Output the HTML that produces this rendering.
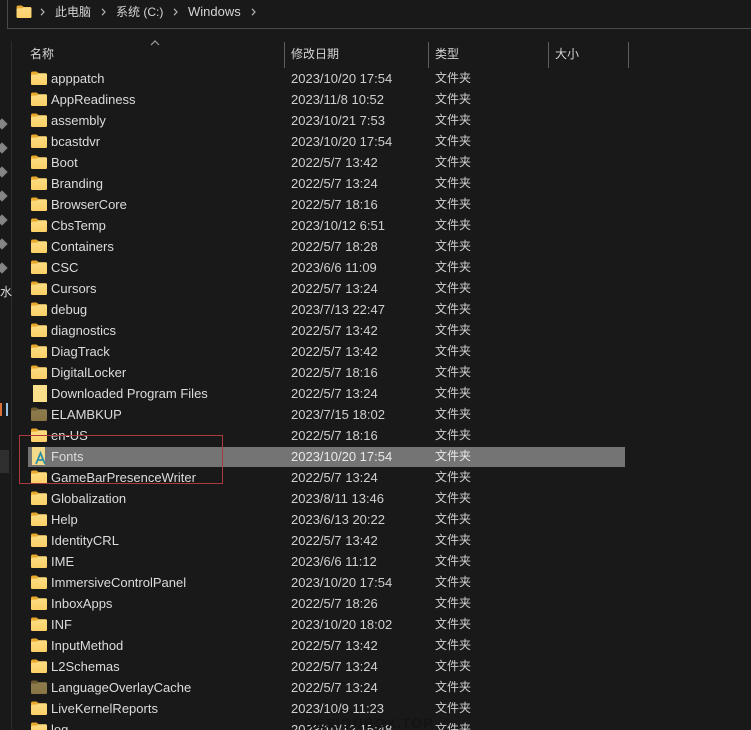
<!DOCTYPE html>
<html><head><meta charset="utf-8">
<style>
html,body{margin:0;padding:0;background:#191919;width:751px;height:730px;overflow:hidden}
body{position:relative;font-family:"Liberation Sans","Noto Sans CJK SC",sans-serif;font-size:13px;color:#dcdcdc}
.a{position:absolute;white-space:nowrap}
.r{position:absolute;left:0;width:751px;height:21px;line-height:21px}
.r svg{position:absolute;left:31px;top:3px}
.n{position:absolute;left:51px;white-space:nowrap}
.d{position:absolute;left:291px;color:#cfcfcf;white-space:nowrap}
.t{position:absolute;left:435px;color:#cfcfcf;white-space:nowrap;font-size:12px}
.s{position:absolute;top:42px;width:1px;height:26px;background:#5e5e5e}
.pin{position:absolute;left:-2px;width:8px;height:8px;background:#858585;transform:rotate(45deg)}
.c{position:absolute;top:8px}
.h{position:absolute;top:46px;line-height:16px;font-size:12px;color:#d4d4d4;white-space:nowrap}
</style></head><body>
<svg width="0" height="0" style="position:absolute"><defs>
<linearGradient id="y" x1="0" y1="0" x2="0" y2="1"><stop offset="0" stop-color="#fbdc82"/><stop offset="1" stop-color="#fdd067"/></linearGradient>
<linearGradient id="z" x1="0" y1="0" x2="0" y2="1"><stop offset="0" stop-color="#8d7c4e"/><stop offset="1" stop-color="#887442"/></linearGradient>
<symbol id="f" viewBox="0 0 16 14"><path d="M0 2.2Q0 .5 1.8 .5H5.5L7.8 2.2H14.5Q16 2.2 16 3.7V12.5Q16 14 14.5 14H1.5Q0 14 0 12.5Z" fill="#e8a92f"/><path d="M0 4.6Q0 3.6 1.2 3.6H5.6L7.8 2.4H14.5Q16 2.4 16 3.7V12.5Q16 14 14.5 14H1.5Q0 14 0 12.5Z" fill="url(#y)"/></symbol>
<symbol id="g" viewBox="0 0 16 14"><path d="M0 2.2Q0 .5 1.8 .5H5.5L7.8 2.2H14.5Q16 2.2 16 3.7V12.5Q16 14 14.5 14H1.5Q0 14 0 12.5Z" fill="#6b5a30"/><path d="M0 4.6Q0 3.6 1.2 3.6H5.6L7.8 2.4H14.5Q16 2.4 16 3.7V12.5Q16 14 14.5 14H1.5Q0 14 0 12.5Z" fill="url(#z)"/></symbol>
</defs></svg>

<div class="a" style="left:7px;top:-2px;width:760px;height:31px;border:1px solid #4a4a4a;box-sizing:border-box"></div>
<svg class="a" style="left:16px;top:5px" width="16" height="13"><use href="#f" width="16" height="13"/></svg>
<svg class="c" style="left:40px" width="5" height="8"><path d="M1 .8L4 4L1 7.2" fill="none" stroke="#b5b5b5" stroke-width="1.2"/></svg>
<div class="a" style="left:55px;top:4px;line-height:16px;font-size:12px;color:#d4d4d4">此电脑</div>
<svg class="c" style="left:101px" width="5" height="8"><path d="M1 .8L4 4L1 7.2" fill="none" stroke="#b5b5b5" stroke-width="1.2"/></svg>
<div class="a" style="left:116px;top:4px;line-height:16px;font-size:12px;color:#d4d4d4">系统 (C:)</div>
<svg class="c" style="left:173px" width="5" height="8"><path d="M1 .8L4 4L1 7.2" fill="none" stroke="#b5b5b5" stroke-width="1.2"/></svg>
<div class="a" style="left:188px;top:4px;line-height:16px;color:#d4d4d4">Windows</div>
<svg class="c" style="left:251px" width="5" height="8"><path d="M1 .8L4 4L1 7.2" fill="none" stroke="#b5b5b5" stroke-width="1.2"/></svg>

<div class="a" style="left:11px;top:41px;width:1px;height:689px;background:#2c2c2c"></div>
<div class="a" style="left:0;top:450px;width:9px;height:23px;background:#2f2f2f"></div>
<div class="pin" style="top:120px"></div><div class="pin" style="top:144px"></div><div class="pin" style="top:168px"></div><div class="pin" style="top:192px"></div><div class="pin" style="top:216px"></div><div class="pin" style="top:240px"></div><div class="pin" style="top:264px"></div>
<div class="a" style="left:0;top:284px;line-height:16px;font-size:12px;color:#ddd">水</div>
<div class="a" style="left:0;top:403px;width:2px;height:13px;background:#d8703a"></div>
<div class="a" style="left:6px;top:403px;width:2px;height:13px;background:#9cc0e0"></div>

<svg class="a" style="left:150px;top:40px" width="10" height="6"><path d="M1 5L5 1L9 5" fill="none" stroke="#a0a0a0" stroke-width="1.2"/></svg>
<div class="h" style="left:30px">名称</div>
<div class="s" style="left:284px"></div>
<div class="h" style="left:291px">修改日期</div>
<div class="s" style="left:428px"></div>
<div class="h" style="left:435px">类型</div>
<div class="s" style="left:548px"></div>
<div class="h" style="left:555px">大小</div>
<div class="s" style="left:628px"></div>

<div class="a" style="left:28px;top:447px;width:597px;height:20px;background:#747474"></div>

<div class="r" style="top:68px"><svg width="16" height="14"><use href="#f"/></svg><span class="n">apppatch</span><span class="d">2023/10/20 17:54</span><span class="t">文件夹</span></div>
<div class="r" style="top:89px"><svg width="16" height="14"><use href="#f"/></svg><span class="n">AppReadiness</span><span class="d">2023/11/8 10:52</span><span class="t">文件夹</span></div>
<div class="r" style="top:110px"><svg width="16" height="14"><use href="#f"/></svg><span class="n">assembly</span><span class="d">2023/10/21 7:53</span><span class="t">文件夹</span></div>
<div class="r" style="top:131px"><svg width="16" height="14"><use href="#f"/></svg><span class="n">bcastdvr</span><span class="d">2023/10/20 17:54</span><span class="t">文件夹</span></div>
<div class="r" style="top:152px"><svg width="16" height="14"><use href="#f"/></svg><span class="n">Boot</span><span class="d">2022/5/7 13:42</span><span class="t">文件夹</span></div>
<div class="r" style="top:173px"><svg width="16" height="14"><use href="#f"/></svg><span class="n">Branding</span><span class="d">2022/5/7 13:24</span><span class="t">文件夹</span></div>
<div class="r" style="top:194px"><svg width="16" height="14"><use href="#f"/></svg><span class="n">BrowserCore</span><span class="d">2022/5/7 18:16</span><span class="t">文件夹</span></div>
<div class="r" style="top:215px"><svg width="16" height="14"><use href="#f"/></svg><span class="n">CbsTemp</span><span class="d">2023/10/12 6:51</span><span class="t">文件夹</span></div>
<div class="r" style="top:236px"><svg width="16" height="14"><use href="#f"/></svg><span class="n">Containers</span><span class="d">2022/5/7 18:28</span><span class="t">文件夹</span></div>
<div class="r" style="top:257px"><svg width="16" height="14"><use href="#f"/></svg><span class="n">CSC</span><span class="d">2023/6/6 11:09</span><span class="t">文件夹</span></div>
<div class="r" style="top:278px"><svg width="16" height="14"><use href="#f"/></svg><span class="n">Cursors</span><span class="d">2022/5/7 13:24</span><span class="t">文件夹</span></div>
<div class="r" style="top:299px"><svg width="16" height="14"><use href="#f"/></svg><span class="n">debug</span><span class="d">2023/7/13 22:47</span><span class="t">文件夹</span></div>
<div class="r" style="top:320px"><svg width="16" height="14"><use href="#f"/></svg><span class="n">diagnostics</span><span class="d">2022/5/7 13:42</span><span class="t">文件夹</span></div>
<div class="r" style="top:341px"><svg width="16" height="14"><use href="#f"/></svg><span class="n">DiagTrack</span><span class="d">2022/5/7 13:42</span><span class="t">文件夹</span></div>
<div class="r" style="top:362px"><svg width="16" height="14"><use href="#f"/></svg><span class="n">DigitalLocker</span><span class="d">2022/5/7 18:16</span><span class="t">文件夹</span></div>
<div class="r" style="top:383px"><svg width="14" height="17" style="left:33px;top:2px"><path d="M0 0H14V17H0Z" fill="#fbdf8a"/></svg><span class="n">Downloaded Program Files</span><span class="d">2022/5/7 13:24</span><span class="t">文件夹</span></div>
<div class="r" style="top:404px"><svg width="16" height="14"><use href="#g"/></svg><span class="n">ELAMBKUP</span><span class="d">2023/7/15 18:02</span><span class="t">文件夹</span></div>
<div class="r" style="top:425px"><svg width="16" height="14"><use href="#f"/></svg><span class="n">en-US</span><span class="d">2022/5/7 18:16</span><span class="t">文件夹</span></div>
<div class="r" style="top:446px"><svg width="15" height="18" style="left:32px;top:1px"><path d="M0 0H13V18H0Z" fill="#f3d98a"/><path d="M4 17L8.5 6L13 17M6 13H11" fill="none" stroke="#2b8fa8" stroke-width="1.7"/></svg><span class="n">Fonts</span><span class="d" style="color:#e8e8e8">2023/10/20 17:54</span><span class="t" style="color:#e8e8e8">文件夹</span></div>
<div class="r" style="top:467px"><svg width="16" height="14"><use href="#f"/></svg><span class="n">GameBarPresenceWriter</span><span class="d">2022/5/7 13:24</span><span class="t">文件夹</span></div>
<div class="r" style="top:488px"><svg width="16" height="14"><use href="#f"/></svg><span class="n">Globalization</span><span class="d">2023/8/11 13:46</span><span class="t">文件夹</span></div>
<div class="r" style="top:509px"><svg width="16" height="14"><use href="#f"/></svg><span class="n">Help</span><span class="d">2023/6/13 20:22</span><span class="t">文件夹</span></div>
<div class="r" style="top:530px"><svg width="16" height="14"><use href="#f"/></svg><span class="n">IdentityCRL</span><span class="d">2022/5/7 13:42</span><span class="t">文件夹</span></div>
<div class="r" style="top:551px"><svg width="16" height="14"><use href="#f"/></svg><span class="n">IME</span><span class="d">2023/6/6 11:12</span><span class="t">文件夹</span></div>
<div class="r" style="top:572px"><svg width="16" height="14"><use href="#f"/></svg><span class="n">ImmersiveControlPanel</span><span class="d">2023/10/20 17:54</span><span class="t">文件夹</span></div>
<div class="r" style="top:593px"><svg width="16" height="14"><use href="#f"/></svg><span class="n">InboxApps</span><span class="d">2022/5/7 18:26</span><span class="t">文件夹</span></div>
<div class="r" style="top:614px"><svg width="16" height="14"><use href="#f"/></svg><span class="n">INF</span><span class="d">2023/10/20 18:02</span><span class="t">文件夹</span></div>
<div class="r" style="top:635px"><svg width="16" height="14"><use href="#f"/></svg><span class="n">InputMethod</span><span class="d">2022/5/7 13:42</span><span class="t">文件夹</span></div>
<div class="r" style="top:656px"><svg width="16" height="14"><use href="#f"/></svg><span class="n">L2Schemas</span><span class="d">2022/5/7 13:24</span><span class="t">文件夹</span></div>
<div class="r" style="top:677px"><svg width="16" height="14"><use href="#g"/></svg><span class="n">LanguageOverlayCache</span><span class="d">2022/5/7 13:24</span><span class="t">文件夹</span></div>
<div class="r" style="top:698px"><svg width="16" height="14"><use href="#f"/></svg><span class="n">LiveKernelReports</span><span class="d">2023/10/9 11:23</span><span class="t">文件夹</span></div>
<div class="r" style="top:719px"><svg width="16" height="14"><use href="#f"/></svg><span class="n">log</span><span class="d">2023/10/12 15:48</span><span class="t">文件夹</span></div>

<div class="a" style="left:19px;top:435px;width:204px;height:49px;border:1px solid #a93a3e;box-sizing:border-box"></div>
<div class="a" style="left:304px;top:715px;font-size:14px;font-weight:bold;letter-spacing:1px;color:#141414">DESIGNBOX.TOP</div>
</body></html>
